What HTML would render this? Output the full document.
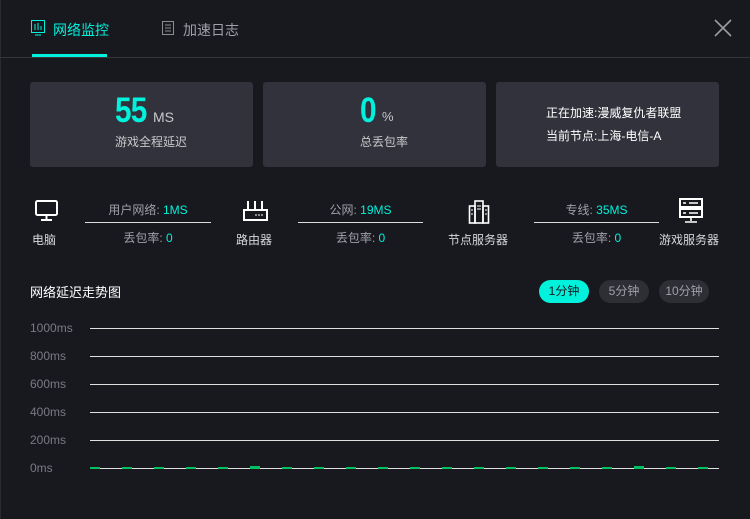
<!DOCTYPE html>
<html><head><meta charset="utf-8"><style>
*{margin:0;padding:0;box-sizing:border-box}
body{width:750px;height:519px;background:#18191f;font-family:"Liberation Sans","Noto Sans CJK SC",sans-serif;position:relative;overflow:hidden;color:#fff}
.a{position:absolute}
.card{position:absolute;top:82px;height:85px;background:#31323b;border-radius:3px}
.c{color:#00f2dc}
.g{color:#a0a0a8}
.lbl{font-size:12px;color:#a0a0a8;text-align:center;white-space:nowrap}
.hl{position:absolute;height:1px;background:#e0e0e0;left:90px;width:629px}
.yl{position:absolute;left:30px;font-size:12px;color:#7a7a82}
.bar{position:absolute;width:10px;height:2px;background:#00c060;top:467px}
.pill{position:absolute;top:280px;height:23px;border-radius:12px;background:#2e2f35;color:#a0a0a8;font-size:12px;line-height:23px;text-align:center}
</style></head><body>
<div class="a" style="left:0;top:0;width:1px;height:519px;background:#2a2b30"></div>
<svg class="a" style="left:31px;top:20px" width="14" height="17" viewBox="0 0 14 17"><rect x="0.5" y="0.5" width="13" height="12" fill="none" stroke="#00f2dc"/><path d="M4 4v6M7 3v7M10 6v4M4 15h6" stroke="#00f2dc"/></svg>
<div class="a c" style="left:53px;top:20px;font-size:14px">网络监控</div>
<div class="a" style="left:32px;top:54px;width:75px;height:3px;background:#00f2dc"></div>
<svg class="a" style="left:162px;top:21px" width="13" height="15" viewBox="0 0 13 15"><rect x="0.5" y="0.5" width="11" height="13" fill="none" stroke="#8a8a90"/><path d="M3 4h6M3 7h6M3 10h6" stroke="#8a8a90"/></svg>
<div class="a g" style="left:183px;top:20px;font-size:14px">加速日志</div>
<svg class="a" style="left:714px;top:19px" width="18" height="18"><path d="M1 1L17 17M17 1L1 17" stroke="#9a9aa0" stroke-width="1.6"/></svg>
<div class="a" style="left:0;top:57px;width:750px;height:1px;background:#35363c"></div>
<div class="card" style="left:30px;width:223px"></div>
<div class="a c" style="left:115px;top:91px;font-size:35px;font-weight:bold;letter-spacing:-1px;transform:scaleX(.85);transform-origin:left">55</div>
<div class="a" style="left:153px;top:109px;font-size:14px;color:#c8c8cc">MS</div>
<div class="a" style="left:115px;top:133px;font-size:12px;color:#c8c8cc">游戏全程延迟</div>
<div class="card" style="left:263px;width:223px"></div>
<div class="a c" style="left:360px;top:91px;font-size:35px;font-weight:bold;transform:scaleX(.85);transform-origin:left">0</div>
<div class="a" style="left:382px;top:109px;font-size:13px;color:#c8c8cc">%</div>
<div class="a" style="left:360px;top:133px;font-size:12px;color:#c8c8cc">总丢包率</div>
<div class="card" style="left:496px;width:223px"></div>
<div class="a" style="left:546px;top:104px;font-size:12px">正在加速:漫威复仇者联盟</div>
<div class="a" style="left:546px;top:127px;font-size:12px">当前节点:上海-电信-A</div>
<svg class="a" style="left:35px;top:200px" width="24" height="22" viewBox="0 0 24 22"><rect x="1" y="1" width="21" height="14" rx="1.5" fill="none" stroke="#fff" stroke-width="2"/><path d="M11.5 15v4M6 20h11" stroke="#fff" stroke-width="2"/></svg>
<div class="a" style="left:32px;top:231px;font-size:12px;color:#d8d8dc">电脑</div>
<div class="a lbl" style="left:85px;top:201px;width:126px">用户网络: <span class="c">1MS</span></div>
<div class="a" style="left:85px;top:222px;width:126px;height:1px;background:#ddd"></div>
<div class="a lbl" style="left:85px;top:229px;width:126px">丢包率: <span class="c">0</span></div>
<svg class="a" style="left:243px;top:201px" width="25" height="20" viewBox="0 0 25 20"><path d="M5 0v8M12 0v8M19 0v8" stroke="#fff" stroke-width="2"/><rect x="1" y="9" width="23" height="10" fill="none" stroke="#fff" stroke-width="2"/><path d="M12 14h2M15 14h2M18 14h2" stroke="#fff"/></svg>
<div class="a" style="left:236px;top:231px;font-size:12px;color:#d8d8dc">路由器</div>
<div class="a lbl" style="left:298px;top:201px;width:125px">公网: <span class="c">19MS</span></div>
<div class="a" style="left:298px;top:222px;width:125px;height:1px;background:#ddd"></div>
<div class="a lbl" style="left:298px;top:229px;width:125px">丢包率: <span class="c">0</span></div>
<svg class="a" style="left:468px;top:200px" width="22" height="24" viewBox="0 0 22 24"><rect x="7" y="1" width="8" height="22" fill="none" stroke="#fff" stroke-width="1.6"/><rect x="1.5" y="6" width="5.5" height="17" fill="none" stroke="#fff" stroke-width="1.6"/><rect x="15" y="6" width="5.5" height="17" fill="none" stroke="#fff" stroke-width="1.6"/><path d="M9 6h4M9 9h4M3 10h2M17 10h2M3 14h2M17 14h2" stroke="#fff"/></svg>
<div class="a" style="left:448px;top:231px;font-size:12px;color:#d8d8dc">节点服务器</div>
<div class="a lbl" style="left:534px;top:201px;width:125px">专线: <span class="c">35MS</span></div>
<div class="a" style="left:534px;top:222px;width:125px;height:1px;background:#ddd"></div>
<div class="a lbl" style="left:534px;top:229px;width:125px">丢包率: <span class="c">0</span></div>
<svg class="a" style="left:679px;top:198px" width="24" height="25" viewBox="0 0 24 25"><rect x="1" y="1" width="22" height="8" fill="none" stroke="#fff" stroke-width="2"/><rect x="1" y="11" width="22" height="8" fill="none" stroke="#fff" stroke-width="2"/><path d="M4 5h3M10 5h9M4 15h3M10 15h9M12 19v4M6 24h12" stroke="#fff" stroke-width="1.6"/></svg>
<div class="a" style="left:659px;top:231px;font-size:12px;color:#d8d8dc">游戏服务器</div>
<div class="a" style="left:30px;top:282px;font-size:13px">网络延迟走势图</div>
<div class="pill" style="left:539px;width:50px;background:#00f2dc;color:#18191f">1分钟</div>
<div class="pill" style="left:599px;width:50px">5分钟</div>
<div class="pill" style="left:659px;width:50px">10分钟</div>
<div class="hl" style="top:328px"></div><div class="yl" style="top:321px">1000ms</div>
<div class="hl" style="top:356px"></div><div class="yl" style="top:349px">800ms</div>
<div class="hl" style="top:384px"></div><div class="yl" style="top:377px">600ms</div>
<div class="hl" style="top:412px"></div><div class="yl" style="top:405px">400ms</div>
<div class="hl" style="top:440px"></div><div class="yl" style="top:433px">200ms</div>
<div class="hl" style="top:468px"></div><div class="yl" style="top:461px">0ms</div>
<div class="bar" style="left:90px"></div><div class="bar" style="left:122px"></div><div class="bar" style="left:154px"></div><div class="bar" style="left:186px"></div><div class="bar" style="left:218px"></div><div class="bar" style="left:250px;top:466px;height:3px"></div><div class="bar" style="left:282px"></div><div class="bar" style="left:314px"></div><div class="bar" style="left:346px"></div><div class="bar" style="left:378px"></div><div class="bar" style="left:410px"></div><div class="bar" style="left:442px"></div><div class="bar" style="left:474px"></div><div class="bar" style="left:506px"></div><div class="bar" style="left:538px"></div><div class="bar" style="left:570px"></div><div class="bar" style="left:602px"></div><div class="bar" style="left:634px;top:466px;height:3px"></div><div class="bar" style="left:666px"></div><div class="bar" style="left:698px"></div>
</body></html>
